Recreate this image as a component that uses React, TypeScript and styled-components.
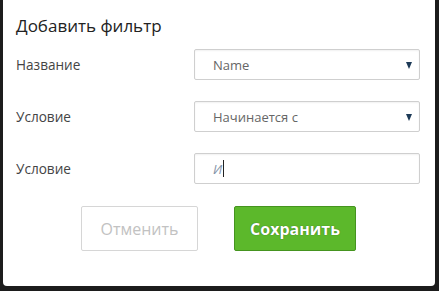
import React from "react";
import styled, { createGlobalStyle } from "styled-components";

const GlobalStyle = createGlobalStyle`
  html, body {
    margin: 0;
    padding: 0;
    background: #1c1c1c;
    font-family: "Open Sans", "Liberation Sans", sans-serif;
  }
  #root {
    width: 439px;
    height: 291px;
    overflow: hidden;
  }
`;

const Dialog = styled.div`
  margin-left: 3px;
  width: 432px;
  height: 286px;
  background: #fff;
  border-radius: 0 0 4px 4px;
  box-sizing: border-box;
  padding: 14px 14px 0 13px;
  display: flex;
  flex-direction: column;
`;

const Title = styled.h3`
  margin: 0 0 12px 0;
  font-size: 17px;
  font-weight: 400;
  line-height: 23px;
  color: #222;
`;

const Form = styled.div`
  display: flex;
  flex-direction: column;
  gap: 21px;
`;

const Row = styled.div`
  display: flex;
  align-items: center;
  height: 31px;
`;

const Label = styled.label`
  width: 178px;
  font-size: 13.6px;
  color: #444;
`;

const Field = styled.div`
  position: relative;
  width: 226px;
  height: 31px;
  box-sizing: border-box;
  border: 1px solid #cfcfcf;
  border-radius: 2px;
  box-shadow: inset 0 1px 2px rgba(0, 0, 0, 0.06);
  padding-left: 18px;
  display: flex;
  align-items: center;
  font-size: 13px;
  color: #666;
`;

const Arrow = styled.span`
  position: absolute;
  right: 7px;
  top: 12px;
  width: 0;
  height: 0;
  border-left: 3.5px solid transparent;
  border-right: 3.5px solid transparent;
  border-top: 7px solid #1d3a57;
`;

const Typed = styled.span`
  font-style: italic;
  color: #8494a8;
`;

const Caret = styled.span`
  display: inline-block;
  width: 1px;
  height: 17px;
  margin-left: 1px;
  background: #222;
`;

const Buttons = styled.div`
  display: flex;
  justify-content: center;
  gap: 36px;
  margin-top: 22px;
`;

const Button = styled.button<{ $primary?: boolean }>`
  height: 45px;
  width: ${(p) => (p.$primary ? "122px" : "117px")};
  box-sizing: border-box;
  border-radius: 2px;
  font-family: "Open Sans", "Liberation Sans", sans-serif;
  font-size: 16px;
  cursor: pointer;
  border: 1px solid ${(p) => (p.$primary ? "#45941f" : "#d6d6d6")};
  background: ${(p) => (p.$primary ? "#5cb82b" : "#fff")};
  color: ${(p) => (p.$primary ? "#fff" : "#c2c2c2")};
  font-weight: ${(p) => (p.$primary ? 700 : 400)};
  text-shadow: ${(p) => (p.$primary ? "0 0 1px rgba(0,0,0,0.55)" : "none")};
`;

const App: React.FC = () => {
  return (
    <>
      <GlobalStyle />
      <Dialog>
        <Title>Добавить фильтр</Title>
        <Form>
          <Row>
            <Label>Название</Label>
            <Field>
              Name
              <Arrow />
            </Field>
          </Row>
          <Row>
            <Label>Условие</Label>
            <Field>
              Начинается с
              <Arrow />
            </Field>
          </Row>
          <Row>
            <Label>Условие</Label>
            <Field>
              <Typed>И</Typed>
              <Caret />
            </Field>
          </Row>
        </Form>
        <Buttons>
          <Button>Отменить</Button>
          <Button $primary>Сохранить</Button>
        </Buttons>
      </Dialog>
    </>
  );
};

export default App;
